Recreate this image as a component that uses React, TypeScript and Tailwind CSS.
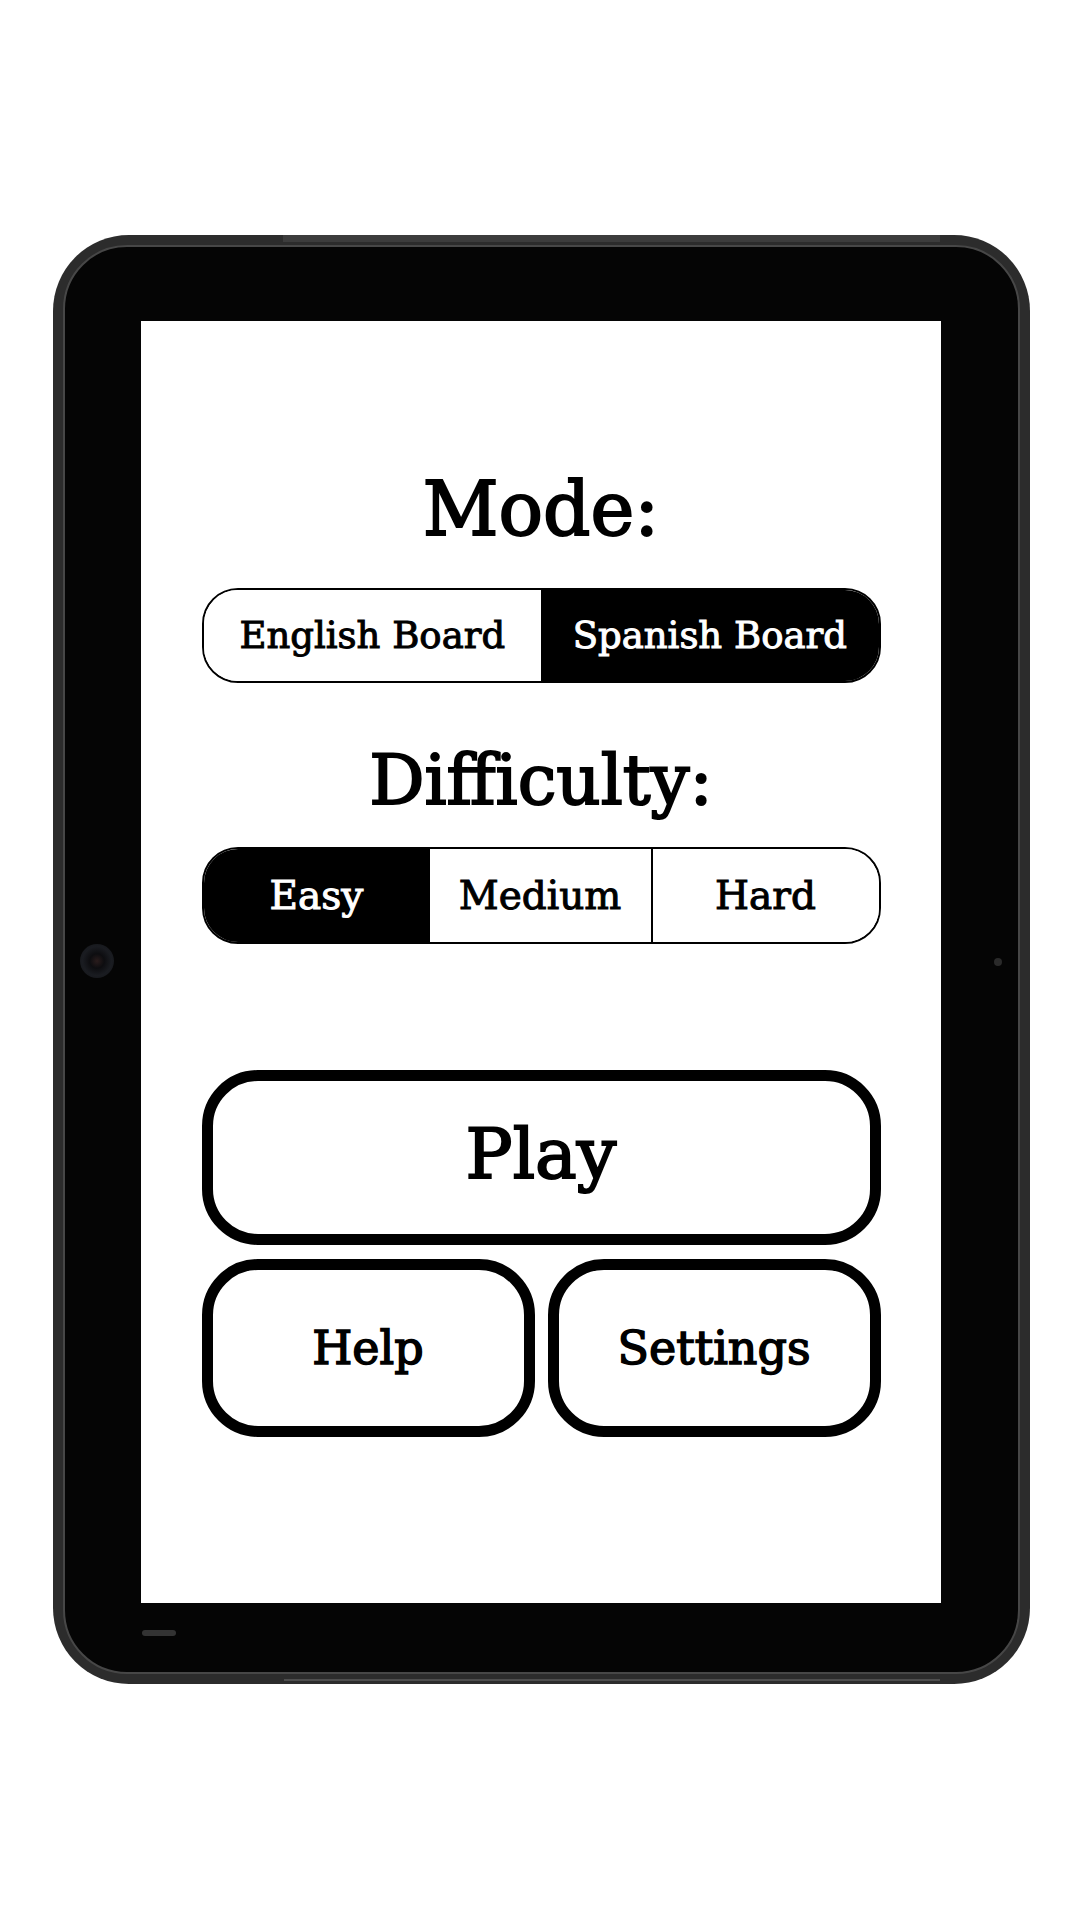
import { useState } from "react";

const serif = "font-['DejaVu_Serif','Liberation_Serif',serif]";

export default function App() {
  const [mode, setMode] = useState<"english" | "spanish">("spanish");
  const [level, setLevel] = useState<"easy" | "medium" | "hard">("easy");

  return (
    <div className={`w-[1080px] h-[1920px] bg-white pt-[235px] pl-[53px] ${serif}`}>
      {/* tablet body */}
      <div className="relative w-[977px] h-[1449px] rounded-[76px] bg-[#2c2c2c] p-[10px]">
        {/* edge highlights */}
        <div className="absolute left-[230px] right-[90px] top-0 h-[7px] bg-[#3c3c3c]" />
        <div className="absolute left-[231px] right-[90px] bottom-[3px] h-[2px] bg-[#4e4e4e]" />

        <div className="h-full rounded-[64px] border-2 border-[#474747] bg-[#050505] pl-[76px] pt-[74px]">
          {/* screen */}
          <div className="w-[800px] h-[1282px] bg-white flex flex-col items-center pt-[151px] text-black">
            <h1 className="text-[74px] leading-none [-webkit-text-stroke:2px]">Mode:</h1>

            <div className="mt-[42px] w-[679px] h-[95px] flex rounded-[36px] border-2 border-black overflow-hidden">
              <button
                onClick={() => setMode("english")}
                className={`flex-1 flex items-center justify-center text-[37px] leading-none [-webkit-text-stroke:1px] ${
                  mode === "english" ? "bg-black text-white" : "bg-white text-black"
                }`}
              >
                English Board
              </button>
              <button
                onClick={() => setMode("spanish")}
                className={`flex-1 flex items-center justify-center text-[37px] leading-none [-webkit-text-stroke:1px] ${
                  mode === "spanish" ? "bg-black text-white" : "bg-white text-black"
                }`}
              >
                Spanish Board
              </button>
            </div>

            <h2 className="mt-[63px] text-[69px] leading-none [-webkit-text-stroke:2px]">Difficulty:</h2>

            <div className="mt-[32px] w-[679px] h-[97px] flex rounded-[36px] border-2 border-black overflow-hidden">
              <button
                onClick={() => setLevel("easy")}
                className={`w-[226px] flex items-center justify-center text-[39px] leading-none [-webkit-text-stroke:1px] ${
                  level === "easy" ? "bg-black text-white" : "bg-white text-black"
                }`}
              >
                Easy
              </button>
              <button
                onClick={() => setLevel("medium")}
                className={`w-[221px] flex items-center justify-center text-[39px] leading-none [-webkit-text-stroke:1px] ${
                  level === "medium" ? "bg-black text-white" : "bg-white text-black"
                }`}
              >
                Medium
              </button>
              <button
                onClick={() => setLevel("hard")}
                className={`flex-1 flex items-center justify-center text-[39px] leading-none border-l-2 border-black [-webkit-text-stroke:1px] ${
                  level === "hard" ? "bg-black text-white" : "bg-white text-black"
                }`}
              >
                Hard
              </button>
            </div>

            <button className="mt-[126px] w-[679px] h-[175px] rounded-[56px] border-[11px] border-black flex items-center justify-center pb-[8px] text-[70px] leading-none [-webkit-text-stroke:2px]">
              Play
            </button>

            <div className="mt-[14px] w-[679px] flex gap-[13px]">
              <button className="flex-1 h-[178px] rounded-[56px] border-[11px] border-black flex items-center justify-center text-[46px] leading-none [-webkit-text-stroke:1.5px]">
                Help
              </button>
              <button className="flex-1 h-[178px] rounded-[56px] border-[11px] border-black flex items-center justify-center text-[46px] leading-none [-webkit-text-stroke:1.5px]">
                Settings
              </button>
            </div>
          </div>
        </div>

        {/* front camera */}
        <div className="absolute left-[27px] top-[709px] w-[34px] h-[34px] rounded-full bg-[radial-gradient(circle,#2a1c1c_0%,#0d0d10_30%,#1a1c21_60%,#121316_100%)]" />
        {/* sensor dot */}
        <div className="absolute left-[941px] top-[723px] w-[8px] h-[8px] rounded-full bg-[#2a2a2a]" />
        {/* speaker slot */}
        <div className="absolute left-[89px] top-[1395px] w-[34px] h-[6px] rounded-full bg-[#333333]" />
      </div>
    </div>
  );
}
